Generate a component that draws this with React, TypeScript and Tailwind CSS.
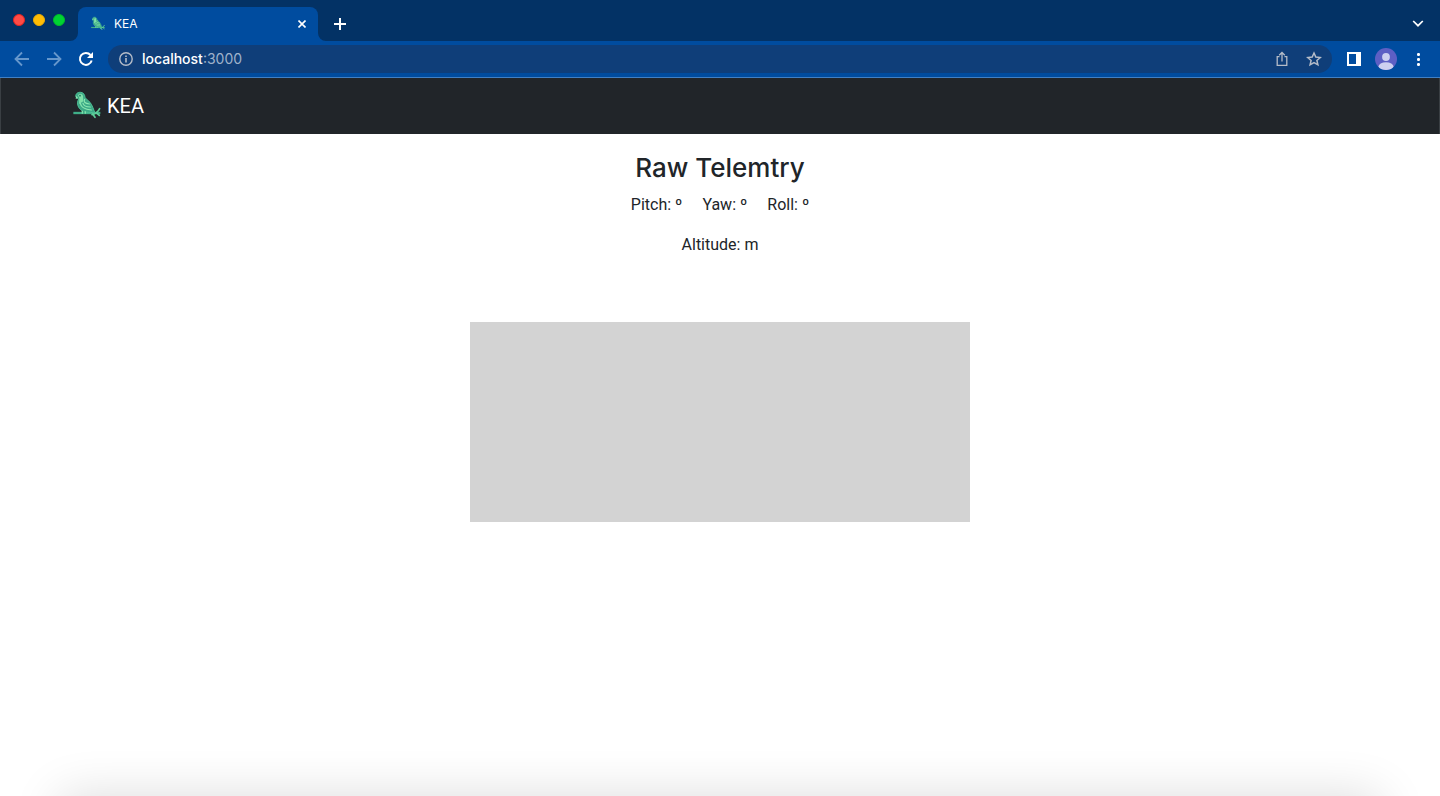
import React from "react";

function KeaLogo({ className }: { className: string }) {
  return (
    <svg viewBox="3 6 96 96" className={className} aria-hidden="true">
      <path d="M10 75H91" stroke="#3fae88" strokeWidth="7" />
      <path
        d="M66 80C78 77 84 72 89 62M68 78L75 88M80 75L88 82"
        fill="none"
        stroke="#5fcf9a"
        strokeWidth="5"
        strokeLinecap="round"
      />
      <path
        d="M18 28C15 18 23 12 32 13C41 14 45 21 45 29L60 43C67 52 70 63 75 75L62 73C46 74 32 69 26 58C21 49 22 40 26 33Z"
        fill="#3da987"
        stroke="#4fc096"
        strokeWidth="3"
        strokeLinejoin="round"
      />
      <path d="M24 22C27 14 37 16 39 24L40 40L27 48L28 30Z" fill="#7ee0a8" />
      <circle cx="30" cy="23" r="2.5" fill="#1b6a61" />
      <path d="M19 23L17 33L24 30Z" fill="#8be8b0" />
      <path
        d="M44 34C39 42 46 47 58 48M31 46C33 58 45 64 64 66M39 46C42 55 50 57 61 57"
        fill="none"
        stroke="#8be8b0"
        strokeWidth="3.5"
        strokeLinecap="round"
      />
      <path d="M37 68V77M46 70V77" stroke="#7ee0a8" strokeWidth="4" />
    </svg>
  );
}

function TabStrip() {
  return (
    <div className="flex h-[41px] items-end bg-[#033265]">
      <div className="flex w-[78px] gap-2 self-start pt-[14px] pl-[13px]">
        <button aria-label="Close window" className="size-3 rounded-full border border-[#e9231f] bg-[#ff4b46]" />
        <button aria-label="Minimize window" className="size-3 rounded-full border border-[#efad00] bg-[#ffbd05]" />
        <button aria-label="Zoom window" className="size-3 rounded-full border border-[#00bd28] bg-[#00d432]" />
      </div>
      <div className="relative flex h-[34px] w-60 items-center rounded-t-lg bg-[#004c9f] px-3 pb-px text-white">
        <svg viewBox="0 0 8 8" className="absolute bottom-0 -left-2 size-2" aria-hidden="true">
          <path d="M8 0V8H0A8 8 0 0 0 8 0Z" fill="#004c9f" />
        </svg>
        <svg viewBox="0 0 8 8" className="absolute -right-2 bottom-0 size-2" aria-hidden="true">
          <path d="M0 0V8H8A8 8 0 0 1 0 0Z" fill="#004c9f" />
        </svg>
        <KeaLogo className="size-4" />
        <span className="ml-2 flex-1 text-xs">KEA</span>
        <button aria-label="Close tab" className="size-2">
          <svg viewBox="0 0 8 8" className="size-2" stroke="currentColor" strokeWidth="1.6">
            <path d="M.5 .5L7.5 7.5M7.5 .5L.5 7.5" />
          </svg>
        </button>
      </div>
      <button aria-label="New tab" className="mb-[11px] ml-4 size-3">
        <svg viewBox="0 0 12 12" className="size-3" stroke="#fff" strokeWidth="2">
          <path d="M6 0V12M0 6H12" />
        </svg>
      </button>
      <button aria-label="Search tabs" className="mr-4 mb-3 ml-auto h-3 w-3">
        <svg viewBox="0 0 12 12" className="size-3" fill="none" stroke="#fff" strokeWidth="1.7">
          <path d="M1.200 4L6 8.700L10.800 4" />
        </svg>
      </button>
    </div>
  );
}

function Toolbar() {
  return (
    <div className="flex h-[37px] items-center border-b border-[#4180c4] bg-[#004c9f]">
      <button aria-label="Back" className="ml-[14px] size-4">
        <svg viewBox="0 0 16 16" className="size-4" fill="none" stroke="#6697cc" strokeWidth="1.8">
          <path d="M15 8H2M8 1.500L1.500 8L8 14.500" />
        </svg>
      </button>
      <button aria-label="Forward" className="ml-4 size-4">
        <svg viewBox="0 0 16 16" className="size-4" fill="none" stroke="#6697cc" strokeWidth="1.8">
          <path d="M1 8H14M8 1.500L14.500 8L8 14.500" />
        </svg>
      </button>
      <button aria-label="Reload" className="ml-4 size-4">
        <svg viewBox="0 0 16 16" className="size-4">
          <path d="M13.700 9.500A6 6 0 1 1 12.500 4" fill="none" stroke="#fff" strokeWidth="2" />
          <path d="M15 1V7H9Z" fill="#fff" />
        </svg>
      </button>
      <div className="ml-[14px] flex h-7 flex-1 items-center rounded-full bg-[#0f3e79] pr-[10px] pl-[11px]">
        <svg viewBox="0 0 14 14" className="size-[14px]" aria-label="Site information">
          <circle cx="7" cy="7" r="6.200" fill="none" stroke="#b5bcc8" strokeWidth="1.400" />
          <path d="M7 6V10.500M7 3.400V5" stroke="#b5bcc8" strokeWidth="1.600" />
        </svg>
        <a href="http://localhost:3000" className="ml-[9px] text-sm text-[#9fb2cb]">
          <span className="font-medium text-white">localhost</span>:3000
        </a>
        <button aria-label="Share" className="mr-4 ml-auto size-4">
          <svg viewBox="0 0 16 16" className="size-4" fill="none" stroke="#b5bcc8" strokeWidth="1.300">
            <path d="M5.500 5.600H3.200V14.300H12.800V5.600H10.500M8 10.500V1.800M5.200 4.300L8 1.500L10.800 4.300" />
          </svg>
        </button>
        <button aria-label="Bookmark this tab" className="size-4">
          <svg viewBox="0 0 16 16" className="size-4" fill="none" stroke="#b5bcc8" strokeWidth="1.500">
            <path d="M8 2L9.800 6.100L14.200 6.500L10.900 9.400L11.900 13.800L8 11.500L4.100 13.800L5.100 9.400L1.800 6.500L6.200 6.100Z" />
          </svg>
        </button>
      </div>
      <button aria-label="Side panel" className="ml-[15px] h-[14px] w-[14px]">
        <svg viewBox="0 0 14 14" className="size-[14px]">
          <path d="M0 0H14V14H0ZM2 2V12H9V2Z" fill="#fff" fillRule="evenodd" />
        </svg>
      </button>
      <button aria-label="Profile" className="ml-[14px] size-[22px]">
        <svg viewBox="0 0 22 22" className="size-[22px]">
          <defs>
            <clipPath id="avatar">
              <circle cx="11" cy="11" r="11" />
            </clipPath>
          </defs>
          <g clipPath="url(#avatar)">
            <rect width="22" height="22" fill="#5d5fc4" />
            <circle cx="11" cy="9" r="3.900" fill="#ced0f0" />
            <ellipse cx="11" cy="18.500" rx="7.500" ry="4.300" fill="#ced0f0" />
          </g>
        </svg>
      </button>
      <button aria-label="Menu" className="mr-[14px] ml-[13px] h-4 w-4">
        <svg viewBox="0 0 16 16" className="size-4" fill="#fff">
          <rect x="7" y="2" width="3" height="3" rx="1.2" />
          <rect x="7" y="7" width="3" height="3" rx="1.2" />
          <rect x="7" y="12" width="3" height="3" rx="1.2" />
        </svg>
      </button>
    </div>
  );
}

export default function App() {
  return (
    <div className="flex min-h-screen flex-col bg-white font-['Inter','Liberation_Sans',sans-serif] text-[#212529]">
      <header>
        <TabStrip />
        <Toolbar />
      </header>
      <nav className="flex h-14 items-center border-x border-[#3a3f43] bg-[#212529] px-[70px] font-['Roboto',sans-serif]">
        <a href="/" className="flex items-center gap-1 text-xl text-white">
          <KeaLogo className="size-8" />
          KEA
        </a>
      </nav>
      <main className="relative flex flex-1 flex-col items-center overflow-hidden pt-[17px]">
        <h1 className="mb-2 text-[26px] leading-[34px] font-medium">Raw Telemtry</h1>
        <p className="mb-4 flex gap-5 font-['Roboto',sans-serif] text-base leading-6">
          <span>Pitch: º</span>
          <span>Yaw: º</span>
          <span>Roll: º</span>
        </p>
        <p className="font-['Roboto',sans-serif] text-base leading-6">Altitude: m</p>
        <div className="mt-[65px] h-[200px] w-full max-w-[500px] bg-[#d3d3d3]" />
        <div className="absolute inset-x-[60px] top-full h-20 shadow-[0_0_50px_rgba(0,0,0,0.14)]" />
      </main>
    </div>
  );
}
